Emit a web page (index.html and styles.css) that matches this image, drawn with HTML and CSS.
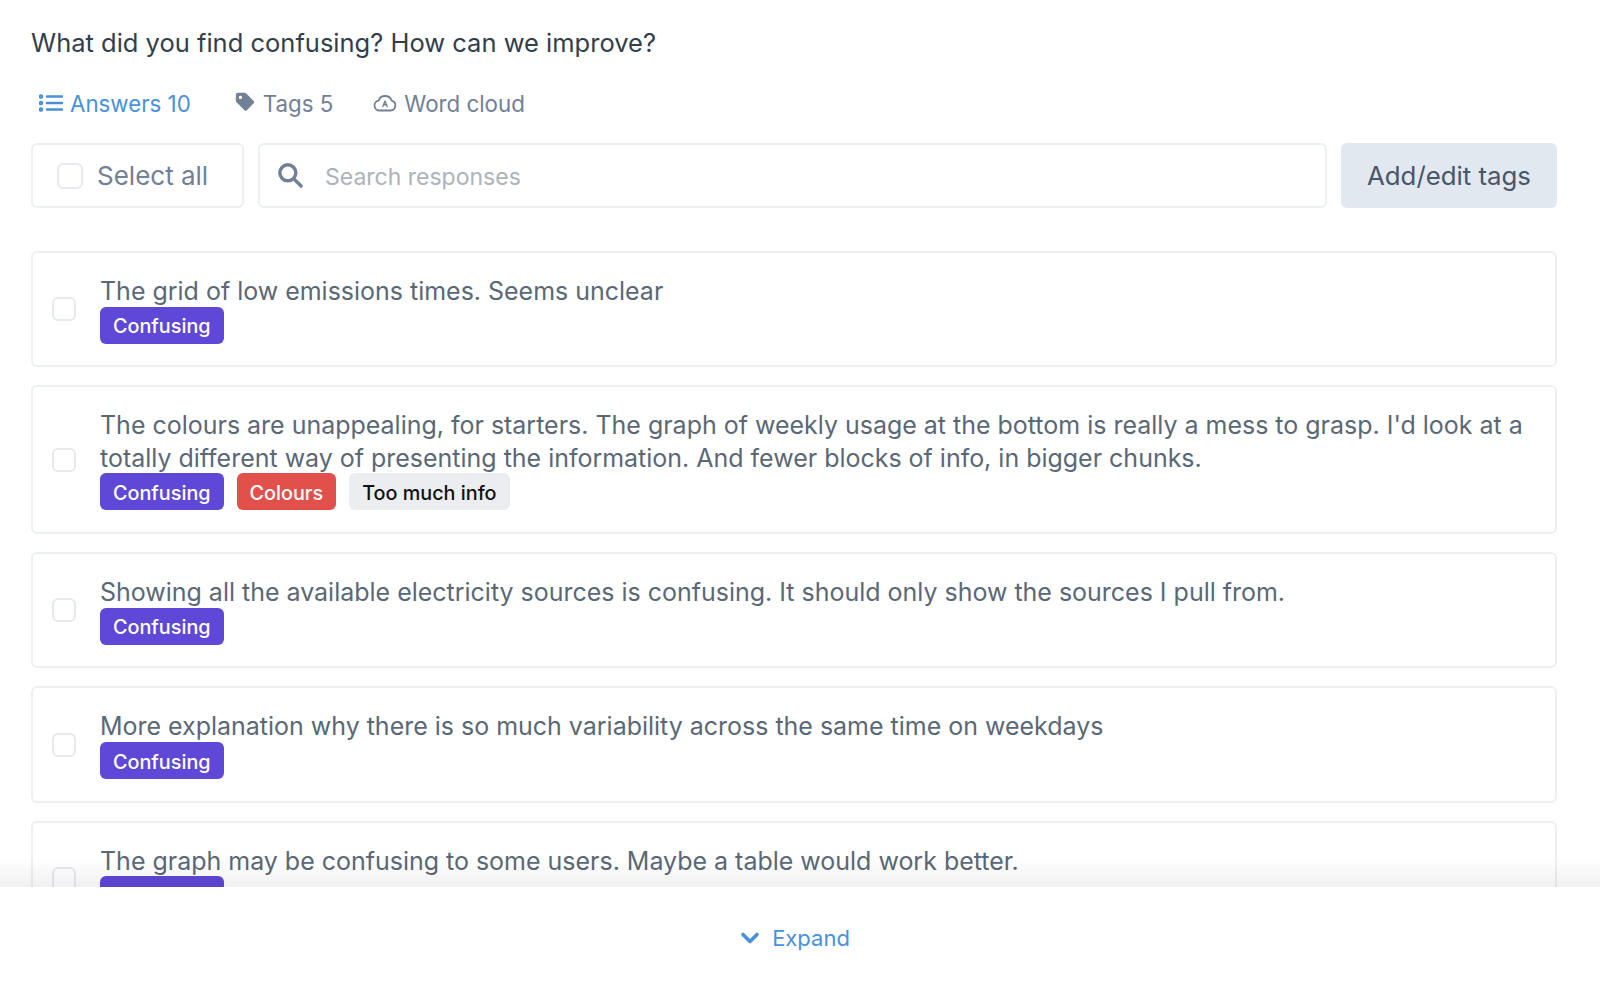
FILE: index.html
```html
<!DOCTYPE html>
<html lang="en">
<head>
<meta charset="utf-8">
<title>Responses</title>
<link rel="stylesheet" href="styles.css">
</head>
<body>
<div class="page">
  <main class="content">
    <h1 class="title">What did you find confusing? How can we improve?</h1>
    <nav class="tabs">
      <a class="tab tab-active">
        <svg class="tab-icon" viewBox="0 0 24 24" fill="none" stroke="currentColor" stroke-width="2.6" stroke-linecap="round"><path d="M8 5.500h15M8 12h15M8 18.500h15"/><circle cx="2" cy="5.500" r="1"/><circle cx="2" cy="12" r="1"/><circle cx="2" cy="18.500" r="1"/></svg>
        Answers 10</a>
      <a class="tab tab-tags">
        <svg class="tab-icon tab-icon-tag" viewBox="0 0 24 24"><path fill="currentColor" fill-rule="evenodd" d="M1 3.500A2.500 2.500 0 0 1 3.500 1h8.200c.6 0 1.100.2 1.500.6l9.200 9.200a2 2 0 0 1 0 2.800l-8.200 8.200a2 2 0 0 1-2.800 0l-9.200-9.200A2 2 0 0 1 1 11.200zM6.500 8.500a2 2 0 1 0 0-4 2 2 0 0 0 0 4z"/></svg>
        Tags 5</a>
      <a class="tab">
        <svg class="tab-icon" viewBox="0 0 24 24" fill="none" stroke="currentColor" stroke-width="1.800" stroke-linejoin="round" stroke-linecap="round"><path d="M6.500 19.500h11a5 5 0 0 0 1.200-9.800A7 7 0 0 0 5.500 9.600a5 5 0 0 0 1 9.900z"/><path stroke-width="1.400" d="M9.800 15.500l2.200-5.500 2.200 5.500M10.600 13.800h2.800"/></svg>
        Word cloud</a>
    </nav>
    <div class="toolbar">
      <label class="select-all"><span class="check"></span>Select all</label>
      <div class="search">
        <svg class="search-icon" viewBox="0 0 24 24" fill="none" stroke="currentColor" stroke-width="3.200" stroke-linecap="round"><circle cx="10" cy="10" r="7.400"/><path d="M15.800 15.800l6.400 6.400"/></svg>
        <span class="placeholder">Search responses</span>
      </div>
      <button class="add-btn">Add/edit tags</button>
    </div>
    <div class="list">
      <article class="card">
        <span class="check check-sm"></span>
        <div class="card-body">
          <p class="answer">The grid of low emissions times. Seems unclear</p>
          <div class="tags"><span class="tag tag-purple">Confusing</span></div>
        </div>
      </article>
      <article class="card">
        <span class="check check-sm"></span>
        <div class="card-body">
          <p class="answer">The colours are unappealing, for starters. The graph of weekly usage at the bottom is really a mess to grasp. I'd look at a totally different way of presenting the information. And fewer blocks of info, in bigger chunks.</p>
          <div class="tags"><span class="tag tag-purple">Confusing</span><span class="tag tag-red">Colours</span><span class="tag tag-gray">Too much info</span></div>
        </div>
      </article>
      <article class="card">
        <span class="check check-sm"></span>
        <div class="card-body">
          <p class="answer">Showing all the available electricity sources is confusing. It should only show the sources I pull from.</p>
          <div class="tags"><span class="tag tag-purple">Confusing</span></div>
        </div>
      </article>
      <article class="card">
        <span class="check check-sm"></span>
        <div class="card-body">
          <p class="answer">More explanation why there is so much variability across the same time on weekdays</p>
          <div class="tags"><span class="tag tag-purple">Confusing</span></div>
        </div>
      </article>
      <article class="card">
        <span class="check check-sm"></span>
        <div class="card-body">
          <p class="answer">The graph may be confusing to some users. Maybe a table would work better.</p>
          <div class="tags"><span class="tag tag-purple">Confusing</span></div>
        </div>
      </article>
    </div>
  </main>
  <footer class="footer">
    <a class="expand">
      <svg class="chevron" viewBox="0 0 20 14" fill="none" stroke="currentColor" stroke-width="3.600" stroke-linecap="round" stroke-linejoin="round"><path d="M3 3.500l7 7 7-7"/></svg>
      Expand</a>
  </footer>
</div>
</body>
</html>
```
FILE: styles.css
```css
* { box-sizing: border-box; }
html, body { margin: 0; padding: 0; background: #fff; }
body { font-family: Inter, "Liberation Sans", sans-serif; }
.page { height: 989px; display: flex; flex-direction: column; overflow: hidden; }
.content { flex: 1; min-height: 0; padding: 26px 43px 0 31px; display: flex; flex-direction: column; }
.content > * { flex: none; }
.title { margin: 0; font-size: 25.5px; line-height: 34px; font-weight: 400; color: #333e4b; }
.tabs { display: flex; gap: 42px; margin-top: 26px; height: 34px; align-items: center; padding-left: 8px; }
.tab { display: flex; align-items: center; gap: 7px; font-size: 22.3px; color: #718096; }
.tab-active { color: #4a90d9; }
.tab-tags { gap: 8px; margin: 0 -2px 0 2px; }
.tab-icon { width: 24px; height: 24px; }
.tab-icon-tag { width: 20px; height: 20px; margin-top: -3px; }
.toolbar { display: flex; gap: 14px; margin-top: 23px; height: 65px; }
.select-all { width: 213px; display: flex; align-items: center; gap: 14px; padding-left: 24px; border: 2px solid #edf0f3; border-radius: 6px; font-size: 26px; color: #718096; }
.check { width: 26px; height: 26px; border: 2px solid #e6eaee; border-radius: 6px; background: #fff; flex: none; }
.search { flex: 1; display: flex; align-items: center; gap: 22px; padding: 2px 0 0 17px; border: 2px solid #edf0f3; border-radius: 6px; }
.search-icon { width: 26px; height: 26px; margin-top: -4px; color: #718096; }
.placeholder { font-size: 23px; color: #adb3bb; }
.add-btn { width: 216px; border: 0; border-radius: 6px; background: #e2e8f0; color: #4a5568; font: 400 25.8px Inter, "Liberation Sans", sans-serif; }
.list { margin-top: 43px; display: flex; flex-direction: column; gap: 18px; }
.card { display: flex; align-items: center; gap: 24px; padding: 22px 30px 21.700px 19px; border: 2px solid #edf0f3; border-radius: 6px; }
.check-sm { width: 24px; height: 24px; }
.card-body { flex: 1; min-width: 0; }
.answer { margin: 0; font-size: 24.97px; line-height: 32.6px; color: #5a6876; }
.tags { display: flex; gap: 13px; margin-top: -1px; }
.tag { height: 37px; padding: 2px 13px 0; display: flex; align-items: center; border-radius: 6px; font-size: 19.8px; font-weight: 500; }
.tag-purple { background: #5f48d8; color: #fff; }
.tag-red { background: #e2504b; color: #fff; }
.tag-gray { background: #ebedf0; color: #111; }
.footer { position: relative; z-index: 1; flex: none; height: 102px; background: #fff; display: flex; justify-content: center; padding: 36px 10px 0 0; }
.footer::before { content: ""; position: absolute; left: 0; right: 0; bottom: 100%; height: 30px; background: linear-gradient(to bottom, rgba(0,0,0,0), rgba(0,0,0,.06)); }
.expand { display: flex; align-items: center; gap: 12px; height: 30px; font-size: 22px; color: #4a90d9; }
.chevron { width: 20px; height: 14px; }
```
